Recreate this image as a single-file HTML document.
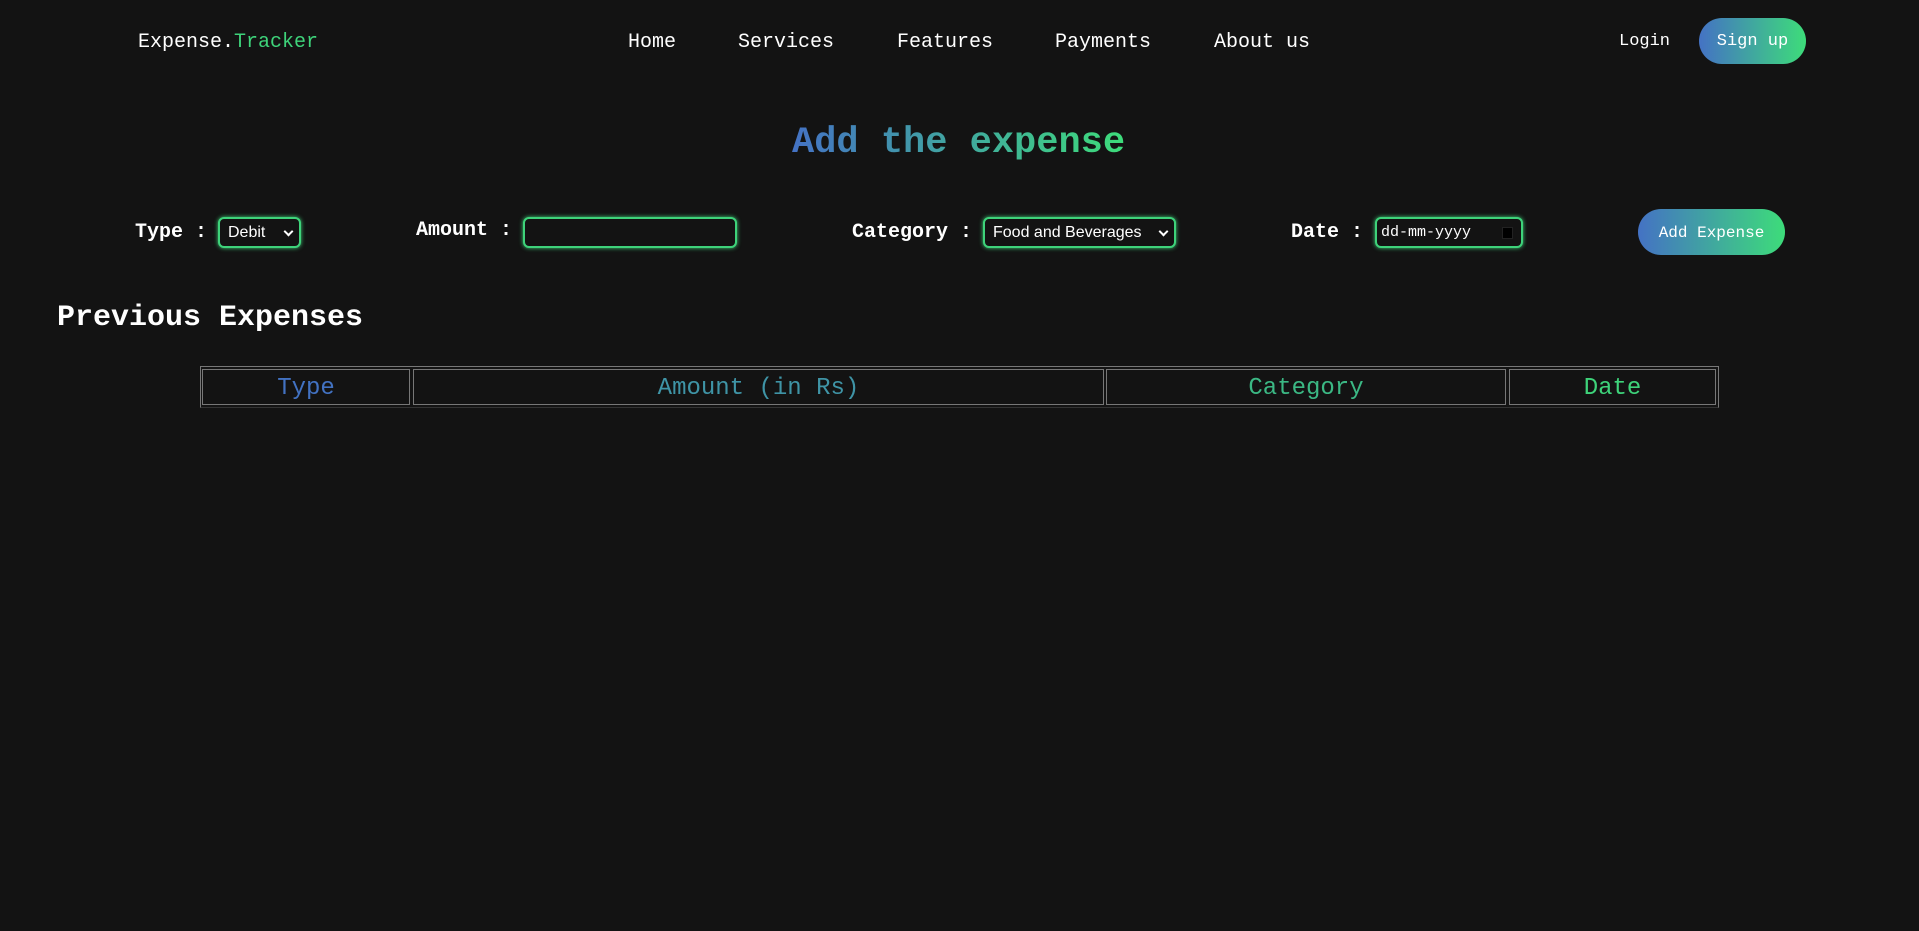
<!DOCTYPE html>
<html><head><meta charset="utf-8"><style>
*{margin:0;padding:0;box-sizing:border-box}
body{width:1919px;height:931px;background:#131313;color:#fff;font-family:"Liberation Mono","DejaVu Sans Mono",monospace;position:relative;overflow:hidden}
.a{position:absolute;white-space:nowrap}
.nav{font-size:20px;top:31px}
.lbl{font-size:20px;font-weight:bold;top:221px}
.box{position:absolute;border:2px solid #3ed37a;border-radius:6px;box-shadow:0 0 4px #3ed37a;background:#131313;font-family:"Liberation Sans",sans-serif;font-size:16px;color:#fff;padding-left:8px;line-height:27px}
.grad{background:linear-gradient(90deg,#4472c4,#3ddc7a)}
.gt{background:linear-gradient(90deg,#4472c4,#3ddc7a);-webkit-background-clip:text;background-clip:text;color:transparent}
.cell{position:absolute;top:369px;height:36px;border:1px solid #777;font-size:24px;text-align:center;line-height:38px}
.chev{position:absolute;right:7px;top:9px;width:7px;height:7px;border-right:2px solid #fff;border-bottom:2px solid #fff;transform:rotate(45deg)}
</style></head><body>
<div class="a nav" style="left:138px">Expense.<span style="color:#3ed37a">Tracker</span></div>
<div class="a nav" style="left:628px">Home</div>
<div class="a nav" style="left:738px">Services</div>
<div class="a nav" style="left:897px">Features</div>
<div class="a nav" style="left:1055px">Payments</div>
<div class="a nav" style="left:1214px">About us</div>
<div class="a" style="left:1619px;top:32px;font-size:17px">Login</div>
<div class="a grad" style="left:1699px;top:18px;width:107px;height:46px;border-radius:23px;font-size:17px;text-align:center;line-height:48px">Sign up</div>
<div class="a gt" style="left:792px;top:122px;font-size:37px;font-weight:bold">Add the expense</div>
<div class="a lbl" style="left:135px">Type :</div>
<div class="box" style="left:218px;top:217px;width:83px;height:31px">Debit <span class="chev"></span></div>
<div class="a lbl" style="left:416px;top:219px">Amount :</div>
<div class="box" style="left:523px;top:217px;width:214px;height:31px"></div>
<div class="a lbl" style="left:852px">Category :</div>
<div class="box" style="left:983px;top:217px;width:193px;height:31px">Food and Beverages <span class="chev"></span></div>
<div class="a lbl" style="left:1291px">Date :</div>
<div class="box" style="left:1375px;top:217px;width:148px;height:31px;font-family:'Liberation Mono',monospace;font-size:15px;padding-left:4px">dd-mm-yyyy<span style="position:absolute;right:8px;top:8px;width:11px;height:12px;background:#000;border:1px solid #222"></span></div>
<div class="a grad" style="left:1638px;top:209px;width:147px;height:46px;border-radius:23px;font-size:16px;text-align:center;line-height:48px">Add Expense</div>
<div class="a" style="left:57px;top:301px;font-size:30px;font-weight:bold">Previous Expenses</div>
<div class="a" style="left:200px;top:366px;width:1519px;height:42px;border:1px solid #777;border-bottom-color:#333"></div>
<div class="cell" style="left:202px;width:208px;color:#4272c2">Type</div>
<div class="cell" style="left:413px;width:691px;color:#3f94a6">Amount (in Rs)</div>
<div class="cell" style="left:1106px;width:400px;color:#3bb884">Category</div>
<div class="cell" style="left:1509px;width:207px;color:#3ed37a">Date</div>
</body></html>
